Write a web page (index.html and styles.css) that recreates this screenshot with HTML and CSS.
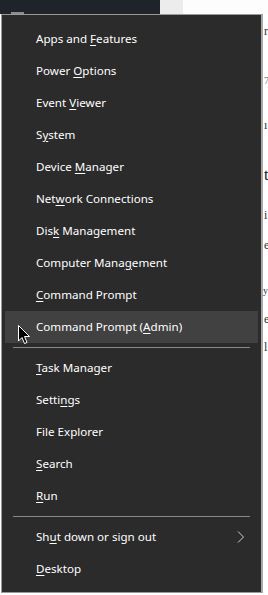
FILE: index.html
```html
<!DOCTYPE html>
<html lang="en">
<head>
  <meta charset="UTF-8">
  <meta name="viewport" content="width=device-width, initial-scale=1">
  <title>Quick Link Menu</title>
  <link rel="stylesheet" href="styles.css">
</head>
<body>

<!-- faixa do topo (janela por tras) -->
<div class="topstrip">
  <div class="dark-part"><span class="tab"></span></div>
  <div class="light-part"></div>
  <div class="white-part"></div>
</div>

<div class="main">
  <div class="menu">
    <ul class="group">
      <li class="item">Apps and <u>F</u>eatures</li>
      <li class="item">Power <u>O</u>ptions</li>
      <li class="item">Event <u>V</u>iewer</li>
      <li class="item">S<u>y</u>stem</li>
      <li class="item">Device <u>M</u>anager</li>
      <li class="item">Net<u>w</u>ork Connections</li>
      <li class="item">Dis<u>k</u> Management</li>
      <li class="item">Computer Mana<u>g</u>ement</li>
      <li class="item"><u>C</u>ommand Prompt</li>
      <li class="item hover">Command Prompt (<u>A</u>dmin)
        <svg class="cursor" width="13" height="20" viewBox="0 0 13 20">
          <path d="M0.5 0.5 L0.5 16 L4 12.5 L6.5 18.5 L9 17.5 L6.5 11.5 L11.5 11.5 Z" fill="#000" stroke="#fff" stroke-width="1"/>
        </svg>
      </li>
    </ul>
    <div class="sep"></div>
    <ul class="group">
      <li class="item"><u>T</u>ask Manager</li>
      <li class="item">Setti<u>n</u>gs</li>
      <li class="item">File Explorer</li>
      <li class="item"><u>S</u>earch</li>
      <li class="item"><u>R</u>un</li>
    </ul>
    <div class="sep"></div>
    <ul class="group">
      <li class="item has-sub">Sh<u>u</u>t down or sign out
        <svg class="chevron" width="8" height="12" viewBox="0 0 8 12">
          <polyline points="1,0.5 6.5,6 1,11.5" fill="none" stroke="#cfcfcf" stroke-width="1"/>
        </svg>
      </li>
      <li class="item"><u>D</u>esktop</li>
    </ul>
  </div>

  <!-- pedaco da pagina que aparece na direita -->
  <div class="page-edge">
    <span class="frag f1">r</span>
    <span class="frag f2">7</span>
    <span class="frag f3">ı</span>
    <span class="frag f4">t</span>
    <span class="frag f5">i</span>
    <span class="frag f6">e</span>
    <span class="frag f7">y</span>
    <span class="frag f8">e</span>
    <span class="frag f9">l</span>
  </div>
</div>

</body>
</html>
```

FILE: styles.css
```css
body {
  margin: 0;
  padding: 0;
  background-color: #ffffff;
  font-family: "Segoe UI", "Noto Sans", "Open Sans", sans-serif;
  overflow: hidden;
}
.topstrip {
  display: flex;
  height: 14px;
}
.dark-part {
  width: 160px;
  background-color: #1f242a;
  position: relative;
}
.tab {
  position: absolute;
  left: 11px;
  top: 12px;
  width: 13px;
  height: 2px;
  background-color: #8c8c8c;
}
.light-part {
  width: 23px;
  background-color: #ececec;
}
.white-part {
  flex: 1;
  background-color: #fdfdfd;
}
.main {
  display: flex;
  align-items: flex-start;
}
.menu {
  width: 259px;
  margin-left: 1px;
  background-color: #2b2b2b;
  border: 1px solid #9a9a9a;
  border-right: 2px solid #a8a8a8;
  padding: 8px 0 7px 0;
  box-sizing: content-box;
  height: 562px;
}
.group {
  list-style: none;
  margin: 0;
  padding: 0;
}
.item {
  position: relative;
  height: 32px;
  line-height: 32px;
  margin: 0 3px;
  padding-left: 31px;
  color: #ffffff;
  font-size: 11.6px;
  white-space: nowrap;
}
.item u {
  text-decoration: underline;
  text-underline-offset: 2px;
}
.item.hover {
  background-color: #414141;
}
.sep {
  height: 1px;
  margin: 4px 11px 4px 11px;
  background-color: #8a8a8a;
}
.chevron {
  position: absolute;
  right: 13px;
  top: 10px;
}
.cursor {
  position: absolute;
  left: 13px;
  top: 14px;
}
.page-edge {
  flex: 1;
  position: relative;
  height: 581px;
  font-family: "Liberation Serif", serif;
  color: #333333;
}
.frag {
  position: absolute;
  left: 1px;
  font-size: 12px;
  line-height: 14px;
}
.f1 { top: 10px; }
.f2 { top: 60px; font-size: 10px; color: #777; }
.f3 { top: 104px; }
.f4 { top: 152px; font-size: 16px; line-height: 18px; color: #111; }
.f5 { top: 194px; }
.f6 { top: 224px; }
.f7 { top: 270px; left: 0; font-size: 10px; }
.f8 { top: 298px; }
.f9 { top: 326px; }
```
